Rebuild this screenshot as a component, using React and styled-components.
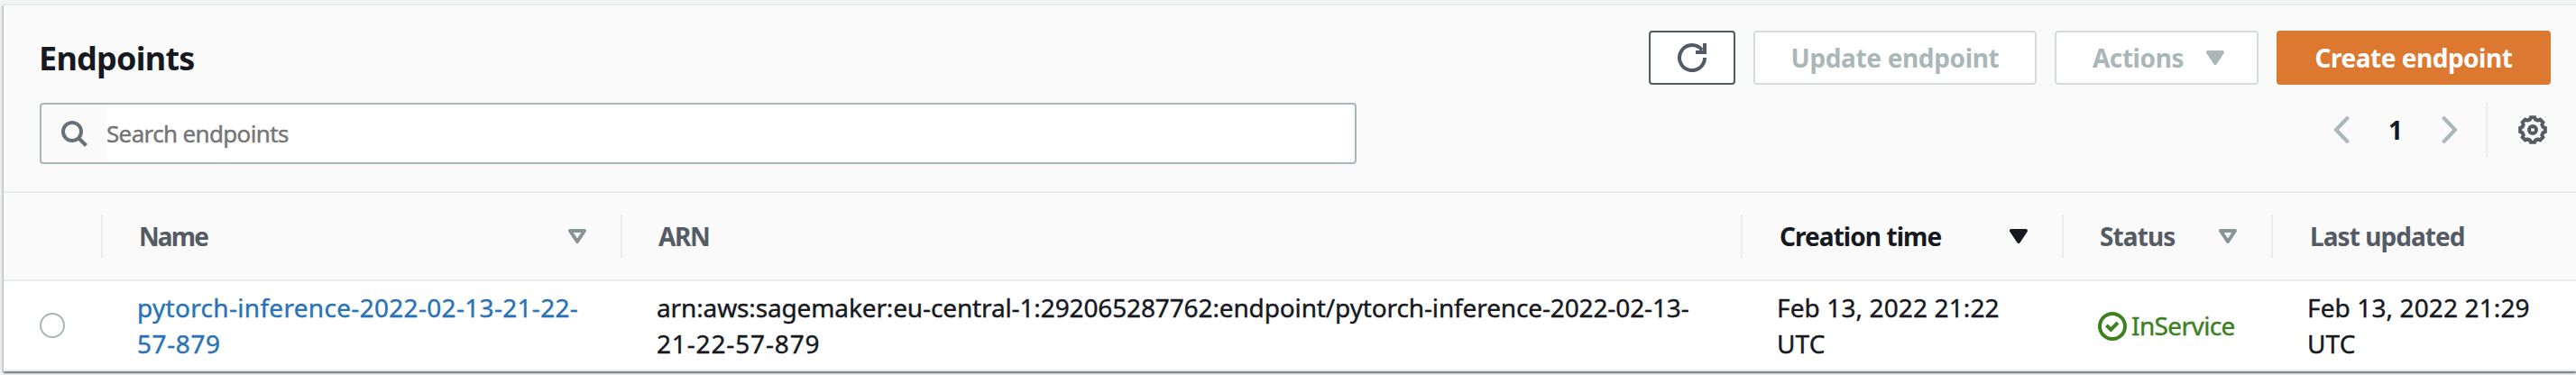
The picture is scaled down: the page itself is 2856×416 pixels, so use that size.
import React from 'react';
import styled, { createGlobalStyle } from 'styled-components';

const GlobalStyle = createGlobalStyle`
  * { box-sizing: border-box; }
  body {
    margin: 0;
    background: #f2f3f3;
    color: #16191f;
    font-family: 'Noto Sans', 'Open Sans', sans-serif;
    font-size: 28px;
    line-height: 40px;
    overflow: hidden;
  }
`;

const Page = styled.main`
  height: 416px;
  padding: 4px 0 0 4px;
  overflow: hidden;
`;

const Card = styled.section`
  background: #fff;
  border-top: 2px solid #eaeded;
  box-shadow: 0 2px 2px 0 rgba(0, 28, 36, 0.3), 2px 2px 2px 0 rgba(0, 28, 36, 0.15),
    -2px 2px 2px 0 rgba(0, 28, 36, 0.15), 0 2px 0 0 rgba(0, 28, 36, 0.12);
`;

const CardHeader = styled.header`
  height: 208px;
  padding: 28px 28px 0 40px;
  background: #fafafa;
  border-bottom: 2px solid #eaeded;
`;

const TitleRow = styled.div`
  display: flex;
  align-items: center;
  justify-content: space-between;
  height: 60px;
`;

const Title = styled.h1`
  margin: 2px 0 0 -1px;
  font-size: 36px;
  line-height: 44px;
  font-weight: 700;
  letter-spacing: -0.75px;
`;

const Actions = styled.div`
  display: flex;
  gap: 20px;
`;

const palette = {
  normal: { bg: '#fff', line: '#545b64', ink: '#545b64' },
  disabled: { bg: '#fff', line: '#d5dbdb', ink: '#aab7b8' },
  primary: { bg: '#dd7831', line: '#dd7831', ink: '#fff' },
};

const Button = styled.button`
  display: flex;
  align-items: center;
  justify-content: center;
  gap: ${(p) => p.$gap || 0}px;
  width: ${(p) => p.$width}px;
  height: 60px;
  padding: 0 0 0 ${(p) => p.$indent || 0}px;
  border: 2px solid ${(p) => palette[p.$tone].line};
  border-radius: 4px;
  background: ${(p) => palette[p.$tone].bg};
  color: ${(p) => palette[p.$tone].ink};
  font: inherit;
  font-weight: 700;
  letter-spacing: ${(p) => p.$tracking || -0.4}px;
`;

const FilterRow = styled.div`
  display: flex;
  align-items: flex-start;
  justify-content: space-between;
  margin-top: 20px;
`;

const SearchBox = styled.label`
  display: flex;
  align-items: center;
  width: 1460px;
  height: 68px;
  padding: 2px 2px 2px 20px;
  border: 2px solid #aab7b8;
  border-radius: 4px;
  color: #687078;
`;

const SearchInput = styled.input`
  flex: 1;
  height: 60px;
  margin-left: 20px;
  padding: 0;
  border: 0;
  outline: 0;
  background: #fff;
  font: inherit;
  font-size: 26px;
  letter-spacing: -0.65px;
  -webkit-text-stroke: 0.4px #757575;
  &::placeholder { color: #757575; opacity: 1; }
`;

const Pager = styled.nav`
  display: flex;
  align-items: center;
  height: 60px;
  padding-right: 4px;
  color: #aab7b8;
`;

const PageNumber = styled.span`
  width: 102px;
  text-align: center;
  color: #16191f;
  font-weight: 700;
`;

const Preferences = styled.div`
  display: flex;
  align-items: center;
  justify-content: flex-end;
  width: 68px;
  height: 60px;
  margin-left: 31px;
  border-left: 2px solid #eaeded;
  color: #545b64;
`;

const Grid = styled.div`
  display: grid;
  grid-template-columns: 110px 576px 1242px 356px 232px 1fr;
  align-items: center;
  border-bottom: 2px solid #eaeded;
`;

const HeadRow = styled(Grid)`
  height: 98px;
  background: #fafafa;
`;

const BodyRow = styled(Grid)`
  height: 100px;
  background: #fff;
`;

const HeadCell = styled.div`
  display: flex;
  align-items: center;
  justify-content: space-between;
  height: 48px;
  padding: 0 38px 0 ${(p) => p.$indent || 41}px;
  border-right: 2px solid ${(p) => (p.$last ? 'transparent' : '#eaeded')};
  color: ${(p) => (p.$sorted ? '#16191f' : '#545b64')};
  font-weight: 700;
  letter-spacing: ${(p) => p.$tracking || 0}px;
`;

const SortIcon = styled.svg`
  flex: none;
  color: ${(p) => (p.$sorted ? '#16191f' : '#879596')};
`;

const Cell = styled.div`
  padding-left: ${(p) => p.$indent || 38}px;
  white-space: nowrap;
  letter-spacing: ${(p) => p.$tracking || 0}px;
  -webkit-text-stroke: 0.4px currentColor;
`;

const WrappedTail = styled.span`
  display: block;
  letter-spacing: ${(p) => p.$tracking}px;
`;

const SelectCell = styled.div`
  display: flex;
  padding-left: 40px;
`;

const Radio = styled.span`
  width: 28px;
  height: 28px;
  border: 2px solid #aab7b8;
  border-radius: 50%;
  background: #fff;
`;

const Link = styled.a`
  color: #2a73b8;
  text-decoration: none;
`;

const Status = styled.span`
  display: flex;
  align-items: center;
  gap: 5px;
  color: #3c8021;
  letter-spacing: -0.6px;
`;

const StatusIcon = styled.svg`
  flex: none;
  margin-top: 2px;
`;

const iconProps = { width: 32, height: 32, viewBox: '0 0 32 32', fill: 'none', stroke: 'currentColor', strokeWidth: 4 };

const RefreshIcon = () => (
  <svg {...iconProps}>
    <path d="M30 16A14 14 0 1 1 27 7.4" />
    <path d="M30 0V10H20" />
  </svg>
);

const SearchIcon = () => (
  <svg {...iconProps}>
    <circle cx="14" cy="14" r="10" />
    <path d="M20.5 20.5L29.5 29.5" />
  </svg>
);

const Chevron = ({ flip }) => (
  <svg width="18" height="32" viewBox="0 0 18 32" fill="none" stroke="currentColor" strokeWidth="4">
    <path d={flip ? 'M1.5 2L15 16L1.5 30' : 'M16.5 2L3 16L16.5 30'} />
  </svg>
);

const gearPath = Array.from({ length: 8 }, (_, i) =>
  [[-9, 14], [9, 14], [16, 11.8], [29, 11.8]].map(([deg, r]) => {
    const a = ((i * 45 + deg) * Math.PI) / 180;
    return `${(16 + r * Math.sin(a)).toFixed(2)} ${(16 - r * Math.cos(a)).toFixed(2)}`;
  }).join('L')
).join('L');

const GearIcon = () => (
  <svg {...iconProps}>
    <path d={`M${gearPath}Z`} />
    <circle cx="16" cy="16" r="4" />
  </svg>
);

const Sort = ({ sorted }) => (
  <SortIcon $sorted={sorted} width="20" height="16" viewBox="0 0 20 16" stroke="currentColor" strokeWidth="4" strokeLinejoin="round" fill={sorted ? 'currentColor' : 'none'}>
    <path d="M2 2H18L10 14Z" />
  </SortIcon>
);

const columns = [
  { label: 'Name', tracking: -1.9, indent: 40, sortable: true },
  { label: 'ARN', tracking: -1.4, indent: 40 },
  { label: 'Creation time', tracking: -0.94, sortable: true, sorted: true },
  { label: 'Status', tracking: -0.9, indent: 40, sortable: true },
  { label: 'Last updated', tracking: -0.95, last: true },
];

export default function App() {
  return (
    <>
      <GlobalStyle />
      <Page>
        <Card>
          <CardHeader>
            <TitleRow>
              <Title>Endpoints</Title>
              <Actions>
                <Button $tone="normal" $width={96} aria-label="Refresh"><RefreshIcon /></Button>
                <Button $tone="disabled" $width={314} $tracking={-0.35}>Update endpoint</Button>
                <Button $tone="disabled" $width={226} $gap={25} $indent={4} $tracking={-0.42}>
                  Actions
                  <svg width="20" height="16" viewBox="0 0 20 16" fill="currentColor" stroke="currentColor" strokeWidth="4" strokeLinejoin="round">
                    <path d="M2 2H18L10 14Z" />
                  </svg>
                </Button>
                <Button $tone="primary" $width={304} $tracking={-0.49}>Create endpoint</Button>
              </Actions>
            </TitleRow>
            <FilterRow>
              <SearchBox>
                <SearchIcon />
                <SearchInput placeholder="Search endpoints" />
              </SearchBox>
              <Pager>
                <Chevron />
                <PageNumber>1</PageNumber>
                <Chevron flip />
                <Preferences><GearIcon /></Preferences>
              </Pager>
            </FilterRow>
          </CardHeader>
          <HeadRow>
            <HeadCell />
            {columns.map((c) => (
              <HeadCell key={c.label} $tracking={c.tracking} $indent={c.indent} $sorted={c.sorted} $last={c.last}>
                {c.label}
                {c.sortable && <Sort sorted={c.sorted} />}
              </HeadCell>
            ))}
          </HeadRow>
          <BodyRow>
            <SelectCell><Radio /></SelectCell>
            <Cell $tracking={0.31}>
              <Link>
                pytorch-inference-2022-02-13-21-22-
                <WrappedTail $tracking={0.6}>57-879</WrappedTail>
              </Link>
            </Cell>
            <Cell $tracking={-0.13}>
              arn:aws:sagemaker:eu-central-1:292065287762:endpoint/pytorch-inference-2022-02-13-
              <WrappedTail $tracking={0.85}>21-22-57-879</WrappedTail>
            </Cell>
            <Cell $tracking={0.12}>Feb 13, 2022 21:22<br />UTC</Cell>
            <Cell>
              <Status>
                <StatusIcon {...iconProps}>
                  <circle cx="16" cy="16" r="14" />
                  <path d="M9.5 14.8L14.3 19.6L22 12" />
                </StatusIcon>
                InService
              </Status>
            </Cell>
            <Cell $tracking={0.12}>Feb 13, 2022 21:29<br />UTC</Cell>
          </BodyRow>
        </Card>
      </Page>
    </>
  );
}
